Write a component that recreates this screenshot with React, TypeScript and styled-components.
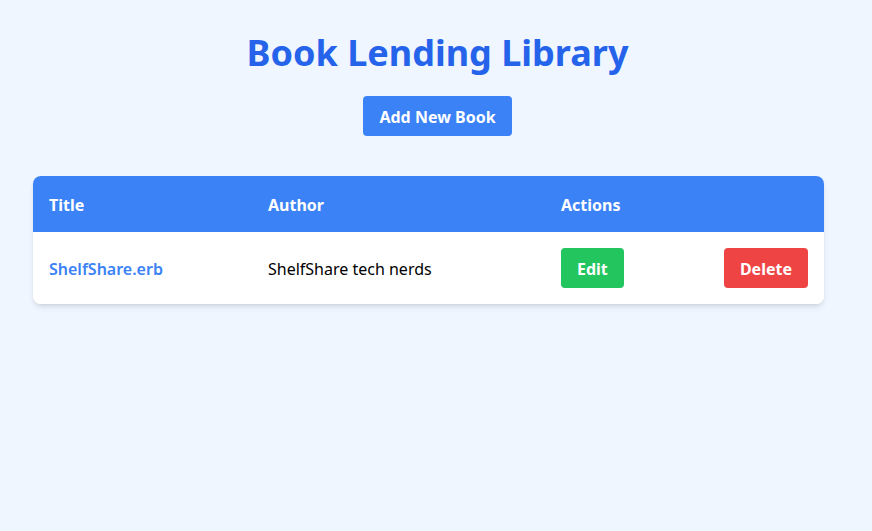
import React from "react";
import styled, { createGlobalStyle } from "styled-components";

const Global = createGlobalStyle`
  html, body { margin: 0; padding: 0; background: #eff6ff; }
  body { font-family: "Noto Sans", "Open Sans", sans-serif; }
  * { box-sizing: border-box; }
`;

const Page = styled.div`
  min-height: 531px;
  padding: 33px 48px 32px 33px;
`;

const Header = styled.header`
  display: flex;
  flex-direction: column;
  align-items: center;
  margin-left: 18px;
  margin-bottom: 40px;
`;

const Title = styled.h1`
  margin: 0 0 23px;
  font-size: 36px;
  line-height: 40px;
  font-weight: 700;
  color: #2563eb;
`;

const Button = styled.button<{ $color: string }>`
  border: none;
  border-radius: 4px;
  padding: 9px 16px 7px;
  font-family: inherit;
  font-size: 16px;
  line-height: 24px;
  font-weight: 660;
  color: #ffffff;
  background: ${(p) => p.$color};
  cursor: pointer;
`;

const Table = styled.div`
  background: #ffffff;
  border-radius: 8px;
  overflow: hidden;
  box-shadow: 0 4px 6px -1px rgba(0, 0, 0, 0.1), 0 2px 4px -2px rgba(0, 0, 0, 0.1);
`;

const Row = styled.div<{ $head?: boolean }>`
  display: grid;
  grid-template-columns: 219px 293px 1fr;
  align-items: center;
  background: ${(p) => (p.$head ? "#3b82f6" : "#ffffff")};
  color: ${(p) => (p.$head ? "#ffffff" : "#000000")};
  font-weight: ${(p) => (p.$head ? 700 : 400)};
`;

const Cell = styled.div`
  padding: 17px 16px 15px;
  font-size: 16px;
  line-height: 24px;
`;

const TitleLink = styled.a`
  color: #3b82f6;
  font-weight: 600;
  text-decoration: none;
`;

const Actions = styled.div`
  padding: 16px;
  display: flex;
  justify-content: space-between;
  align-items: center;
`;

export default function App() {
  return (
    <>
      <Global />
      <Page>
        <Header>
          <Title>Book Lending Library</Title>
          <Button $color="#3b82f6">Add New Book</Button>
        </Header>
        <Table>
          <Row $head>
            <Cell>Title</Cell>
            <Cell>Author</Cell>
            <Cell>Actions</Cell>
          </Row>
          <Row>
            <Cell>
              <TitleLink href="#">ShelfShare.erb</TitleLink>
            </Cell>
            <Cell>ShelfShare tech nerds</Cell>
            <Actions>
              <Button $color="#22c55e">Edit</Button>
              <Button $color="#ef4444">Delete</Button>
            </Actions>
          </Row>
        </Table>
      </Page>
    </>
  );
}
